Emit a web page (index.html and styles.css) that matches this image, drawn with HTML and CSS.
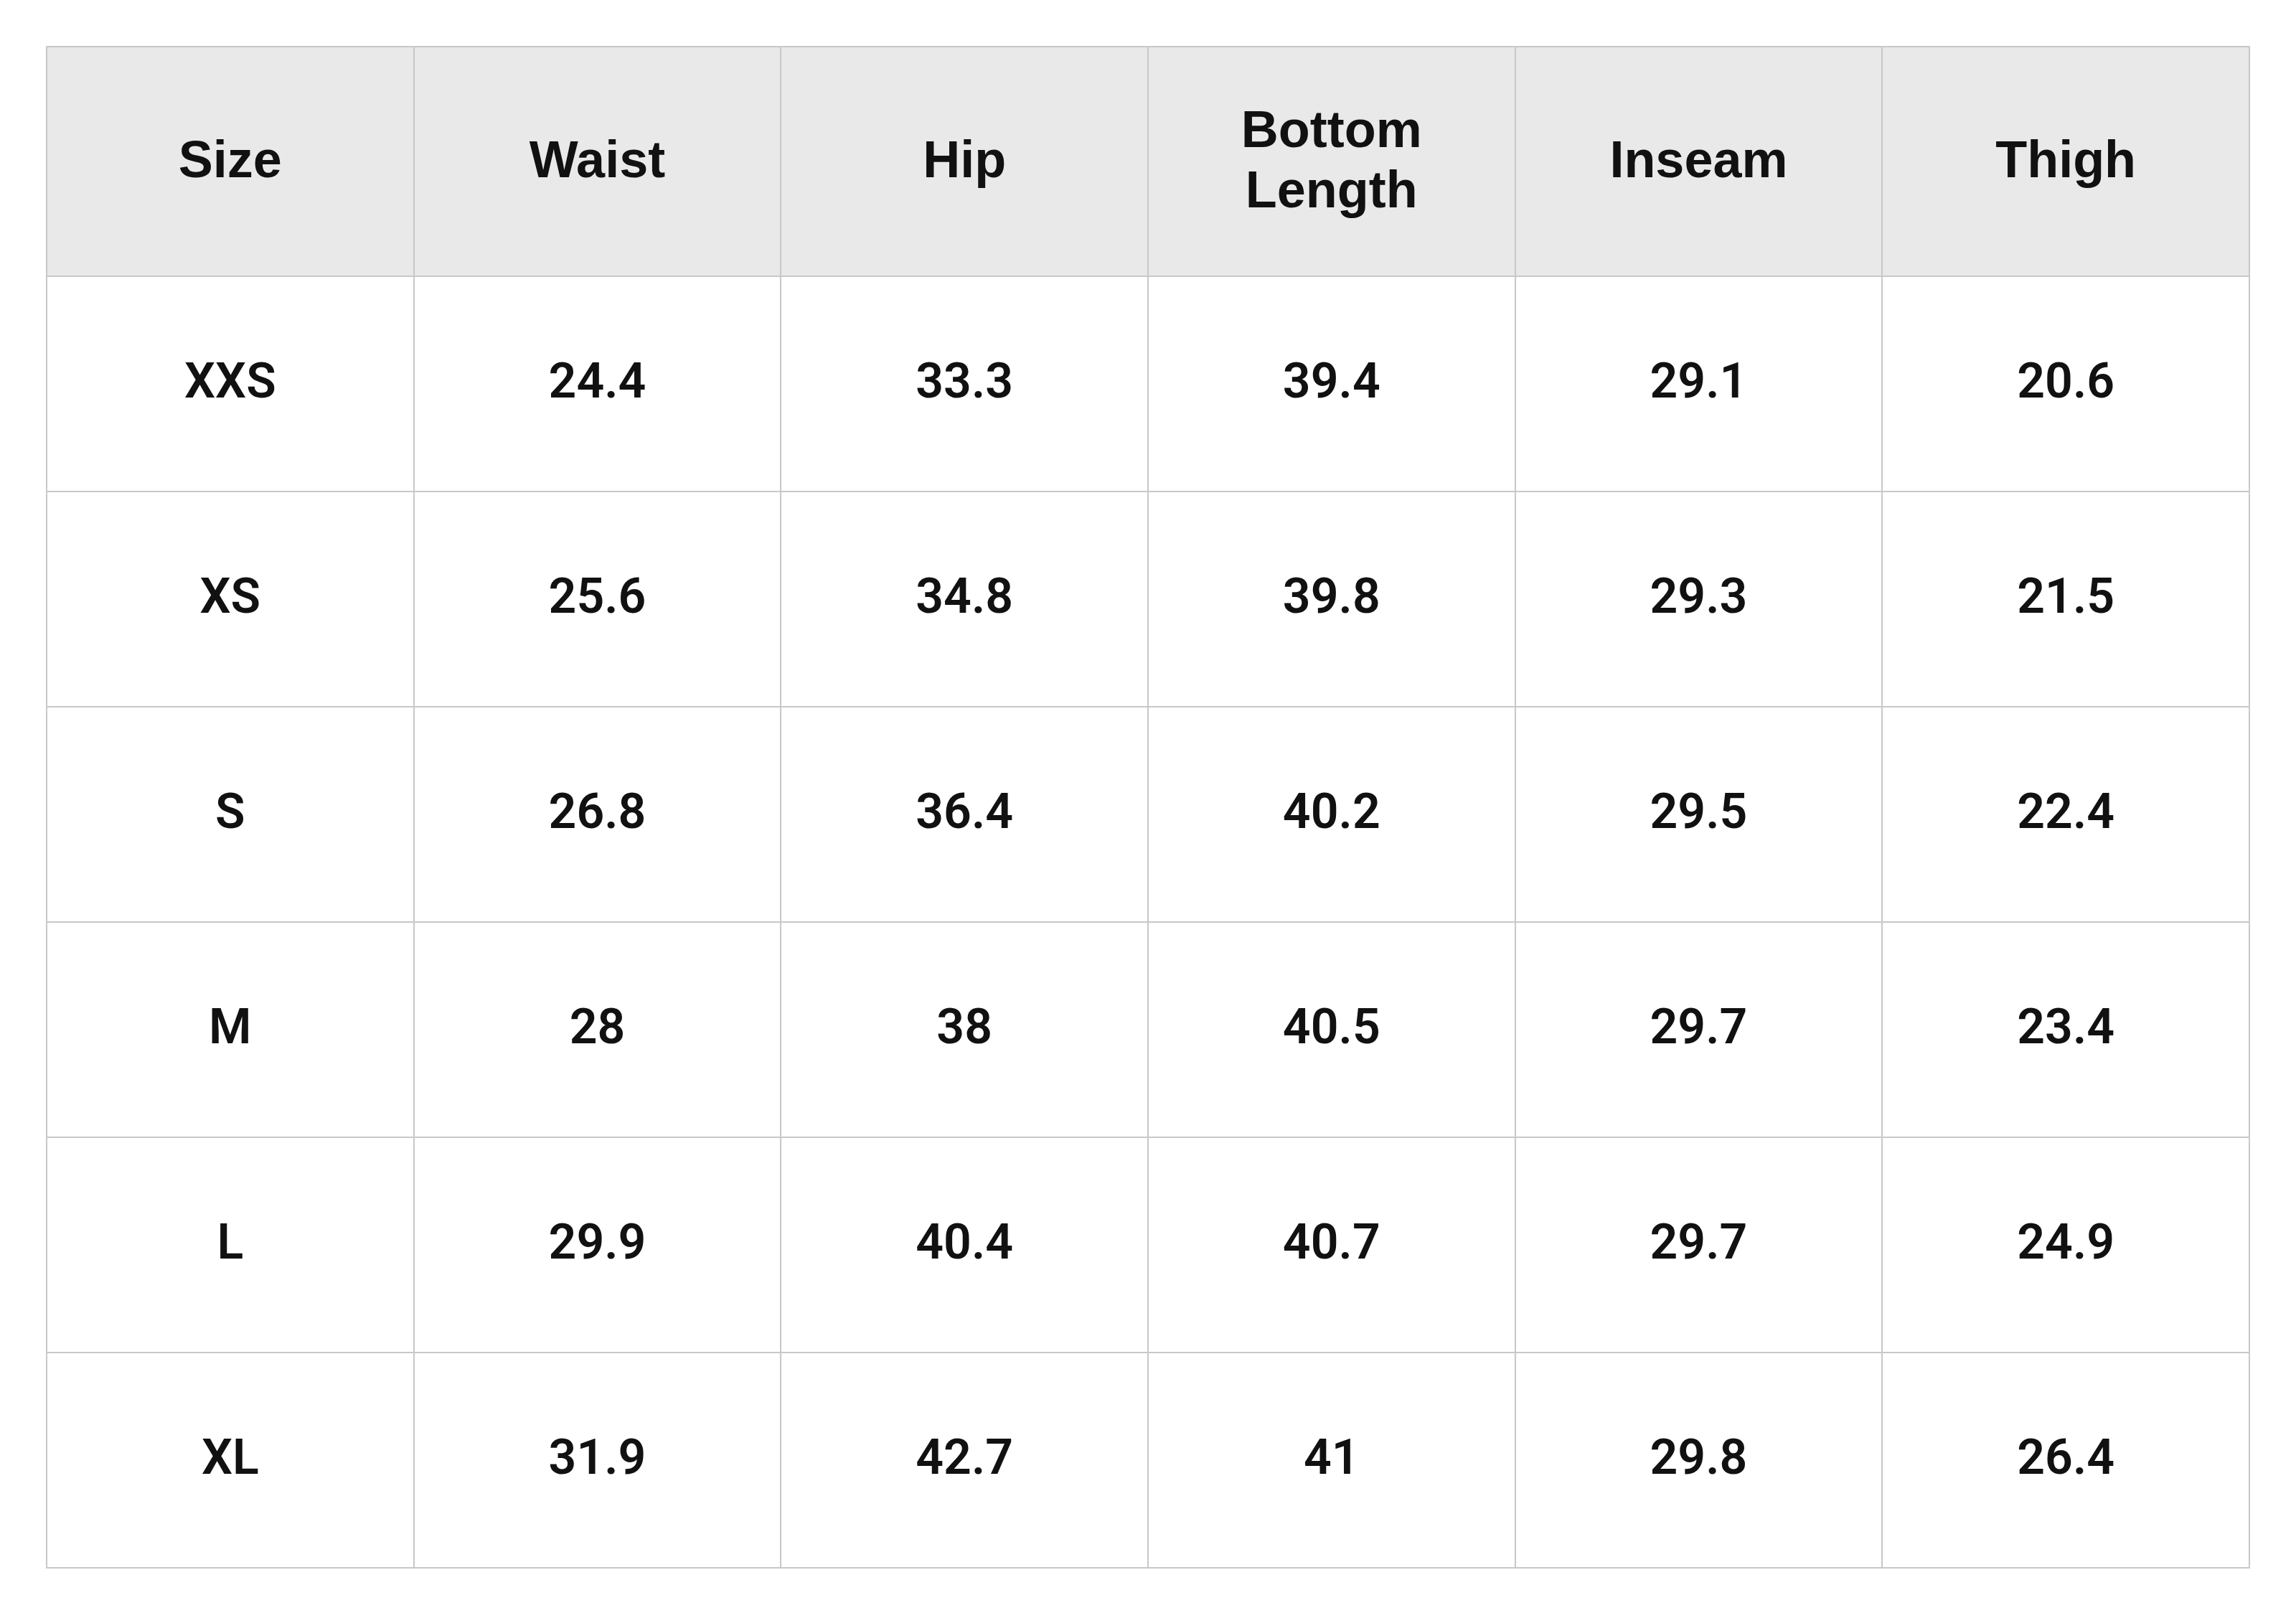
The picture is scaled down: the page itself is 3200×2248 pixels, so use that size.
FILE: index.html
```html
<!DOCTYPE html>
<html lang="en">
<head>
<meta charset="utf-8">
<title>Size Chart</title>
<link rel="stylesheet" href="styles.css">
</head>
<body>
<div class="page">
<table class="size-table">
  <thead>
    <tr>
      <th>Size</th><th>Waist</th><th>Hip</th><th>Bottom<br>Length</th><th>Inseam</th><th>Thigh</th>
    </tr>
  </thead>
  <tbody>
    <tr><td>XXS</td><td>24.4</td><td>33.3</td><td>39.4</td><td>29.1</td><td>20.6</td></tr>
    <tr><td>XS</td><td>25.6</td><td>34.8</td><td>39.8</td><td>29.3</td><td>21.5</td></tr>
    <tr><td>S</td><td>26.8</td><td>36.4</td><td>40.2</td><td>29.5</td><td>22.4</td></tr>
    <tr><td>M</td><td>28</td><td>38</td><td>40.5</td><td>29.7</td><td>23.4</td></tr>
    <tr><td>L</td><td>29.9</td><td>40.4</td><td>40.7</td><td>29.7</td><td>24.9</td></tr>
    <tr><td>XL</td><td>31.9</td><td>42.7</td><td>41</td><td>29.8</td><td>26.4</td></tr>
  </tbody>
</table>
</div>
</body>
</html>
```
FILE: styles.css
```css
html, body {
  margin: 0;
  padding: 0;
  background: #ffffff;
}
.page {
  padding: 64px;
}
.size-table {
  width: 3072px;
  border-collapse: collapse;
  table-layout: fixed;
  color: #111111;
}
.size-table th,
.size-table td {
  border: 2px solid #c8c8c8;
  text-align: center;
  vertical-align: middle;
  padding: 0;
}
.size-table th {
  background: #e9e9e9;
  height: 312px;
  padding-bottom: 6px;
  font-family: "Liberation Sans", Arial, sans-serif;
  font-size: 72px;
  font-weight: 700;
  line-height: 1.17;
}
.size-table td {
  height: 292px;
  padding-bottom: 6px;
  font-family: Roboto, "Liberation Sans", Arial, sans-serif;
  font-size: 68px;
  font-weight: 600;
  line-height: 1.2;
}
```
